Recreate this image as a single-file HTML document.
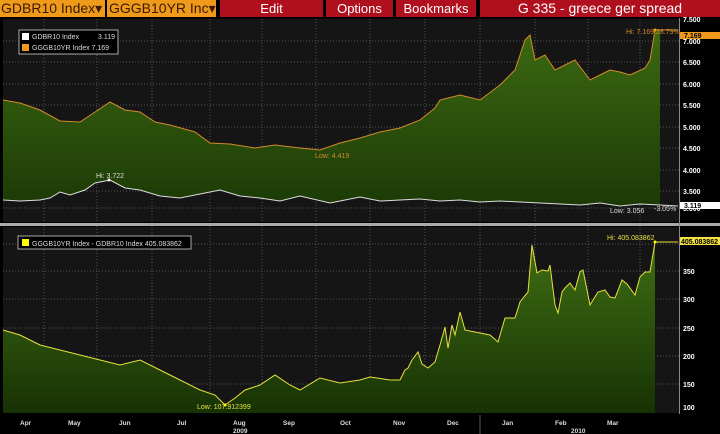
<!DOCTYPE html><html><head><style>
body{margin:0;width:720px;height:434px;background:#000;overflow:hidden;font-family:"Liberation Sans",sans-serif}
.h{position:absolute;top:0;height:17px;font-size:13px;line-height:17px;text-align:center;color:#fff}
</style></head><body>
<div class="h" style="left:0;width:104px;background:#f09a1c;color:#3a1a00;text-align:left;padding-left:1px;font-size:14px">GDBR10 Index▾</div>
<div class="h" style="left:107px;width:107px;background:#f09a1c;color:#3a1a00;text-align:left;padding-left:2px;font-size:14px">GGGB10YR Inc▾</div>
<div class="h" style="left:220px;width:103px;background:#b0101e">Edit</div>
<div class="h" style="left:326px;width:67px;background:#b0101e">Options</div>
<div class="h" style="left:396px;width:80px;background:#b0101e">Bookmarks</div>
<div class="h" style="left:480px;width:240px;background:#b0101e;font-size:14px">G 335 - greece ger spread</div>
<svg width="720" height="434" style="position:absolute;left:0;top:0" font-family="Liberation Sans" >
<defs>
<linearGradient id="g1" x1="0" y1="0" x2="0" y2="1"><stop offset="0" stop-color="#3c6a12"/><stop offset="1" stop-color="#1c3a06"/></linearGradient>
<linearGradient id="g2" x1="0" y1="0" x2="0" y2="1"><stop offset="0" stop-color="#3f6f14"/><stop offset="1" stop-color="#173204"/></linearGradient>
</defs>
<rect x="3" y="19" width="676" height="203" fill="#151515"/>
<rect x="3" y="227" width="676" height="186" fill="#151515"/>
<g stroke="#555" stroke-dasharray="1,2" stroke-width="1">
<line x1="44" y1="19" x2="44" y2="413"/><line x1="97" y1="19" x2="97" y2="413"/><line x1="152" y1="19" x2="152" y2="413"/><line x1="210" y1="19" x2="210" y2="413"/><line x1="262" y1="19" x2="262" y2="413"/><line x1="316" y1="19" x2="316" y2="413"/><line x1="370" y1="19" x2="370" y2="413"/><line x1="425" y1="19" x2="425" y2="413"/><line x1="480" y1="19" x2="480" y2="413"/><line x1="535" y1="19" x2="535" y2="413"/><line x1="588" y1="19" x2="588" y2="413"/><line x1="640" y1="19" x2="640" y2="413"/>
<line x1="3" y1="41" x2="679" y2="41"/><line x1="3" y1="62" x2="679" y2="62"/><line x1="3" y1="84" x2="679" y2="84"/><line x1="3" y1="105" x2="679" y2="105"/><line x1="3" y1="127" x2="679" y2="127"/><line x1="3" y1="148" x2="679" y2="148"/><line x1="3" y1="170" x2="679" y2="170"/><line x1="3" y1="191" x2="679" y2="191"/><line x1="3" y1="208" x2="679" y2="208"/>
<line x1="3" y1="244" x2="679" y2="244"/><line x1="3" y1="271" x2="679" y2="271"/><line x1="3" y1="299" x2="679" y2="299"/><line x1="3" y1="328" x2="679" y2="328"/><line x1="3" y1="356" x2="679" y2="356"/><line x1="3" y1="384" x2="679" y2="384"/>
</g>
<path d="M3,100 L20,103 L40,110 L60,121 L80,122 L95,112 L110,102 L125,110 L140,112 L155,122 L170,125 L195,132 L210,143 L230,144 L255,148 L275,145 L300,148 L320,150 L340,143 L360,138 L380,132 L400,128 L420,120 L435,108 L440,100 L460,95 L480,100 L500,85 L515,70 L525,40 L530,35 L535,60 L545,55 L555,70 L565,65 L575,60 L590,80 L600,75 L610,70 L620,72 L630,75 L645,68 L650,60 L655,30 L660,30 L660,205 L640,204 L620,206 L600,203 L580,205 L560,204 L540,203 L520,202 L500,201 L480,202 L460,200 L440,201 L420,199 L400,200 L380,201 L360,197 L330,203 L300,196 L280,201 L260,198 L240,196 L220,190 L200,194 L180,198 L160,196 L140,190 L125,188 L110,180 L95,183 L85,190 L70,195 L60,192 L50,198 L40,200 L20,201 L3,200 Z" fill="url(#g1)"/>
<path d="M3,100 L20,103 L40,110 L60,121 L80,122 L95,112 L110,102 L125,110 L140,112 L155,122 L170,125 L195,132 L210,143 L230,144 L255,148 L275,145 L300,148 L320,150 L340,143 L360,138 L380,132 L400,128 L420,120 L435,108 L440,100 L460,95 L480,100 L500,85 L515,70 L525,40 L530,35 L535,60 L545,55 L555,70 L565,65 L575,60 L590,80 L600,75 L610,70 L620,72 L630,75 L645,68 L650,60 L655,30 L678,30" fill="none" stroke="#d48a2a" stroke-width="1"/>
<path d="M3,200 L20,201 L40,200 L50,198 L60,192 L70,195 L85,190 L95,183 L110,180 L125,188 L140,190 L160,196 L180,198 L200,194 L220,190 L240,196 L260,198 L280,201 L300,196 L330,203 L360,197 L380,201 L400,200 L420,199 L440,201 L460,200 L480,202 L500,201 L520,202 L540,203 L560,204 L580,205 L600,203 L620,206 L640,204 L660,205 L678,206" fill="none" stroke="#ddd" stroke-width="1"/>
<rect x="0" y="223" width="720" height="3" fill="#aaa"/>
<path id="bp" d="M3,330 L20,335 L40,345 L60,350 L80,355 L100,360 L120,365 L140,360 L160,370 L180,380 L200,390 L215,395 L225,405 L235,398 L245,390 L260,385 L275,375 L290,385 L300,390 L320,378 L340,383 L360,380 L370,377 L390,380 L400,380 L405,370 L408,368 L412,360 L418,352 L422,364 L428,368 L435,362 L440,345 L445,327 L448,348 L452,325 L455,335 L460,312 L465,330 L475,332 L490,335 L498,342 L505,318 L515,318 L520,302 L523,298 L528,292 L532,245 L537,273 L542,270 L548,271 L550,265 L555,305 L558,313 L562,292 L565,288 L570,283 L575,290 L580,272 L583,270 L590,305 L593,300 L598,292 L605,290 L610,297 L615,298 L622,280 L627,284 L635,295 L640,277 L645,272 L650,272 L655,242 L655,413 L3,413 Z" fill="url(#g2)"/>
<path d="M3,330 L20,335 L40,345 L60,350 L80,355 L100,360 L120,365 L140,360 L160,370 L180,380 L200,390 L215,395 L225,405 L235,398 L245,390 L260,385 L275,375 L290,385 L300,390 L320,378 L340,383 L360,380 L370,377 L390,380 L400,380 L405,370 L408,368 L412,360 L418,352 L422,364 L428,368 L435,362 L440,345 L445,327 L448,348 L452,325 L455,335 L460,312 L465,330 L475,332 L490,335 L498,342 L505,318 L515,318 L520,302 L523,298 L528,292 L532,245 L537,273 L542,270 L548,271 L550,265 L555,305 L558,313 L562,292 L565,288 L570,283 L575,290 L580,272 L583,270 L590,305 L593,300 L598,292 L605,290 L610,297 L615,298 L622,280 L627,284 L635,295 L640,277 L645,272 L650,272 L655,242 L678,242" fill="none" stroke="#e8e040" stroke-width="1"/>
<rect x="679" y="18" width="1" height="396" fill="#888"/>
<g fill="#fff" font-size="7" font-weight="bold">
<text x="683" y="22">7.500</text><text x="683" y="44">7.000</text><text x="683" y="65">6.500</text><text x="683" y="87">6.000</text><text x="683" y="108">5.500</text><text x="683" y="130">5.000</text><text x="683" y="151">4.500</text><text x="683" y="173">4.000</text><text x="683" y="194">3.500</text><text x="683" y="211">3.000</text>
<text x="683" y="274">350</text><text x="683" y="302">300</text><text x="683" y="331">250</text><text x="683" y="359">200</text><text x="683" y="387">150</text><text x="683" y="410">100</text>
</g>
<rect x="680" y="32" width="40" height="7" fill="#f09a1c"/><text x="684" y="38" font-size="7" font-weight="bold" fill="#000">7.169</text>
<rect x="680" y="202" width="40" height="7" fill="#fff"/><text x="684" y="208" font-size="7" font-weight="bold" fill="#000">3.119</text>
<rect x="680" y="237" width="40" height="8" fill="#f0e040"/><text x="681" y="244" font-size="7" font-weight="bold" fill="#000">405.083862</text>
<g font-size="7">
<text x="626" y="34" fill="#d48a2a">Hi: 7.169/28.79%</text>
<text x="315" y="158" fill="#d48a2a">Low: 4.419</text>
<text x="96" y="178" fill="#ddd">Hi: 3.722</text>
<text x="610" y="213" fill="#ddd">Low: 3.056</text><text x="654" y="211" fill="#ddd">-3.05%</text>
<text x="607" y="240" fill="#e8e040">Hi: 405.083862</text>
<text x="197" y="409" fill="#e8e040">Low: 107.912399</text>
</g>
<circle cx="655" cy="30" r="1.5" fill="#f09a1c"/><circle cx="109" cy="180" r="1.5" fill="#fff"/><circle cx="655" cy="242" r="1.5" fill="#ff0"/><circle cx="225" cy="405" r="1.5" fill="#ff0"/>
<rect x="19" y="30" width="99" height="24" fill="#000" stroke="#aaa"/>
<rect x="22" y="33" width="7" height="7" fill="#fff"/><rect x="22" y="44" width="7" height="7" fill="#f09a1c"/>
<g font-size="7" fill="#ddd"><text x="32" y="39">GDBR10 Index</text><text x="98" y="39">3.119</text><text x="32" y="50">GGGB10YR Index  7.169</text></g>
<rect x="18" y="236" width="173" height="13" fill="#000" stroke="#aaa"/>
<rect x="22" y="239" width="7" height="7" fill="#ff0"/>
<text x="32" y="246" font-size="7" fill="#ddd">GGGB10YR Index - GDBR10 Index  405.083862</text>
<g font-size="6.5" font-weight="bold" fill="#ddd">
<text x="20" y="425">Apr</text><text x="68" y="425">May</text><text x="119" y="425">Jun</text><text x="177" y="425">Jul</text><text x="233" y="425">Aug</text><text x="283" y="425">Sep</text><text x="340" y="425">Oct</text><text x="393" y="425">Nov</text><text x="447" y="425">Dec</text><text x="502" y="425">Jan</text><text x="555" y="425">Feb</text><text x="607" y="425">Mar</text>
<text x="233" y="433">2009</text><text x="571" y="433">2010</text>
</g>
<line x1="480" y1="415" x2="480" y2="434" stroke="#555"/>
</svg>
</body></html>
